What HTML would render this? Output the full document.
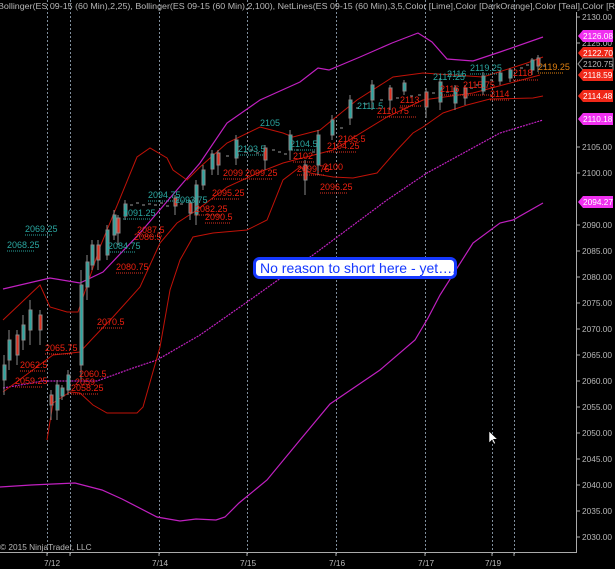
<!DOCTYPE html>
<html><head><meta charset="utf-8"><style>
html,body{margin:0;padding:0;background:#000;width:615px;height:569px;overflow:hidden}
svg{display:block}
.ax{font:8.3px "Liberation Sans",sans-serif;fill:#b8b8b8}
.r{font:9px "Liberation Sans",sans-serif;fill:#f02010}
.t{font:9px "Liberation Sans",sans-serif;fill:#2aa6a0}
.tag{font:8.3px "Liberation Sans",sans-serif;fill:#fff}
</style></head><body>
<svg width="615" height="569" viewBox="0 0 615 569" xmlns="http://www.w3.org/2000/svg">
<rect width="615" height="569" fill="#000"/>
<g stroke="#7f8e9c" stroke-width="1" stroke-dasharray="2,2">
<line x1="47.5" y1="0" x2="47.5" y2="555"/><line x1="70.5" y1="0" x2="70.5" y2="555"/>
<line x1="159.5" y1="0" x2="159.5" y2="555"/><line x1="247.5" y1="0" x2="247.5" y2="555"/>
<line x1="336.5" y1="0" x2="336.5" y2="555"/><line x1="425.5" y1="0" x2="425.5" y2="555"/>
<line x1="492.5" y1="0" x2="492.5" y2="555"/><line x1="514.5" y1="0" x2="514.5" y2="555"/>
</g>
<text x="-2" y="9" class="ax" style="font-size:8.6px" textLength="617" lengthAdjust="spacingAndGlyphs">Bollinger(ES 09-15 (60 Min),2,25), Bollinger(ES 09-15 (60 Min),2,100), NetLines(ES 09-15 (60 Min),3,5,Color [Lime],Color [DarkOrange],Color [Teal],Color [R</text>
<!-- magenta bands -->
<g fill="none" stroke="#c020c0" stroke-width="1.2">
<polyline points="3,289 50,278 80,283 103,272 140,233 200,163 227,123 260,100 300,82 318,68 329,70 360,57 392,43 418,33 432,42 447,59 473,61 500,52 543,37"/>
<polyline points="0,487 31,485 75,483 102,490 122,499 157,517 180,521 196,519 216,520 225,517 239,503 267,480 300,440 330,404 380,370 415,340 428,318 440,295 473,243 500,223 513,220 543,203"/>
<polyline stroke-dasharray="2,1" points="3,388 43,381 97,381 133,368 157,360 200,335 250,300 313,255 387,200 427,173 500,133 543,120"/>
</g>
<!-- red bands -->
<g fill="none" stroke="#c01208" stroke-width="1">
<polyline points="3,320 40,285 50,307 67,312 78,312 100,247 137,157 150,148 167,158 173,170 187,180 200,167 227,143 260,127 283,133 293,137 320,130 357,100 393,77 423,73 483,77 527,63 543,57"/>
<polyline points="47,440 53,403 70,392 80,393 93,405 107,413 137,413 143,407 160,347 170,290 180,260 193,237 213,233 247,230 267,220 283,180 300,167 310,173 333,177 353,178 377,173 397,150 413,133 423,127 443,113 467,105 490,99 533,98 543,96"/>
<polyline points="3,392 53,355 80,352 93,338 113,317 140,287 160,243 177,223 197,210 227,187 260,172 283,163 333,150 387,117 423,100 473,93 540,75"/>
</g>
<!-- candles -->
<g stroke-width="1">
<g stroke="#888" fill="#2aa6a0">
<line x1="4" y1="355" x2="4" y2="395"/><rect x="3" y="365" width="3" height="15"/>
<line x1="9" y1="330" x2="9" y2="370"/><rect x="8" y="340" width="3" height="20"/>
<line x1="23" y1="315" x2="23" y2="350"/><rect x="22" y="325" width="3" height="15"/>
<line x1="30" y1="300" x2="30" y2="345"/><rect x="29" y="310" width="3" height="20"/>
<line x1="57" y1="380" x2="57" y2="420"/><rect x="56" y="385" width="3" height="25"/>
<line x1="62" y1="385" x2="62" y2="400"/><rect x="61" y="388" width="3" height="8"/>
<line x1="68" y1="370" x2="68" y2="395"/><rect x="67" y="375" width="3" height="15"/>
<line x1="81" y1="270" x2="81" y2="380"/><rect x="80" y="285" width="3" height="80"/>
<line x1="87" y1="255" x2="87" y2="300"/><rect x="86" y="262" width="3" height="25"/>
<line x1="92" y1="240" x2="92" y2="270"/><rect x="91" y="245" width="3" height="20"/>
<line x1="107" y1="225" x2="107" y2="260"/><rect x="106" y="230" width="3" height="25"/>
<line x1="114" y1="210" x2="114" y2="240"/><rect x="113" y="215" width="3" height="20"/>
<line x1="125" y1="200" x2="125" y2="220"/><rect x="124" y="204" width="3" height="12"/>
<line x1="196" y1="180" x2="196" y2="225"/><rect x="195" y="185" width="3" height="30"/>
<line x1="203" y1="165" x2="203" y2="190"/><rect x="202" y="170" width="3" height="15"/>
<line x1="212" y1="150" x2="212" y2="175"/><rect x="211" y="154" width="3" height="15"/>
<line x1="236" y1="135" x2="236" y2="165"/><rect x="235" y="140" width="3" height="18"/>
<line x1="290" y1="130" x2="290" y2="160"/><rect x="289" y="135" width="3" height="15"/>
<line x1="318" y1="130" x2="318" y2="175"/><rect x="317" y="135" width="3" height="30"/>
<line x1="332" y1="115" x2="332" y2="140"/><rect x="331" y="120" width="3" height="15"/>
<line x1="350" y1="95" x2="350" y2="125"/><rect x="349" y="100" width="3" height="18"/>
<line x1="372" y1="80" x2="372" y2="110"/><rect x="371" y="85" width="3" height="15"/>
<line x1="404" y1="80" x2="404" y2="95"/><rect x="403" y="83" width="3" height="8"/>
<line x1="440" y1="78" x2="440" y2="110"/><rect x="439" y="82" width="3" height="20"/>
<line x1="455" y1="85" x2="455" y2="110"/><rect x="454" y="88" width="3" height="15"/>
<line x1="483" y1="72" x2="483" y2="95"/><rect x="482" y="76" width="3" height="15"/>
<line x1="500" y1="70" x2="500" y2="85"/><rect x="499" y="73" width="3" height="8"/>
<line x1="510" y1="68" x2="510" y2="82"/><rect x="509" y="70" width="3" height="8"/>
<line x1="532" y1="58" x2="532" y2="75"/><rect x="531" y="60" width="3" height="10"/>
</g>
<g stroke="#888" fill="#e03020">
<line x1="17" y1="330" x2="17" y2="365"/><rect x="16" y="335" width="3" height="20"/>
<line x1="40" y1="310" x2="40" y2="345"/><rect x="39" y="315" width="3" height="15"/>
<line x1="51" y1="390" x2="51" y2="420"/><rect x="50" y="395" width="3" height="10"/>
<line x1="98" y1="240" x2="98" y2="270"/><rect x="97" y="245" width="3" height="15"/>
<line x1="118" y1="215" x2="118" y2="245"/><rect x="117" y="218" width="3" height="15"/>
<line x1="175" y1="195" x2="175" y2="215"/><rect x="174" y="198" width="3" height="8"/>
<line x1="190" y1="200" x2="190" y2="220"/><rect x="189" y="203" width="3" height="10"/>
<line x1="218" y1="150" x2="218" y2="175"/><rect x="217" y="153" width="3" height="12"/>
<line x1="265" y1="145" x2="265" y2="170"/><rect x="264" y="148" width="3" height="12"/>
<line x1="305" y1="160" x2="305" y2="195"/><rect x="304" y="165" width="3" height="15"/>
<line x1="390" y1="85" x2="390" y2="110"/><rect x="389" y="88" width="3" height="12"/>
<line x1="426" y1="88" x2="426" y2="118"/><rect x="425" y="92" width="3" height="15"/>
<line x1="465" y1="85" x2="465" y2="105"/><rect x="464" y="88" width="3" height="10"/>
<line x1="538" y1="55" x2="538" y2="72"/><rect x="537" y="58" width="3" height="8"/>
</g>
<g stroke="#999" stroke-width="1">
<path d="M130 205h3M136 203h3M142 205h3M148 204h3M154 205h3M160 203h3M166 206h3M180 204h3M226 156h3M244 152h3M250 150h3M256 153h3M272 150h3M278 152h3M284 154h3M296 150h3M312 152h3M340 128h3M356 108h3M364 104h3M380 100h3M396 98h3M410 96h3M418 95h3M432 93h3M446 92h3M470 88h3M476 85h3M490 80h3M520 68h3M526 65h3M543 66h3"/>
</g>
</g>
<!-- labels -->
<g>
<text class="t" x="25" y="232">2069.25</text><text class="t" x="7" y="248">2068.25</text>
<text class="r" x="45" y="351">2065.75</text><text class="r" x="20" y="368">2062.5</text>
<text class="r" x="15" y="384">2059.25</text><text class="r" x="79" y="377">2060.5</text>
<text class="r" x="75" y="385">2059</text><text class="r" x="71" y="391">2058.25</text>
<text class="r" x="97" y="325">2070.5</text><text class="r" x="116" y="270">2080.75</text>
<text class="t" x="108" y="249">2084.75</text><text class="r" x="137" y="233">2087.5</text>
<text class="r" x="134" y="240">2086.5</text><text class="t" x="123" y="216">2091.25</text>
<text class="t" x="148" y="198">2094.75</text><text class="t" x="175" y="203">2093.75</text>
<text class="r" x="195" y="212">2082.25</text><text class="r" x="205" y="220">2090.5</text>
<text class="r" x="212" y="196">2095.25</text><text class="r" x="223" y="176">2099</text>
<text class="r" x="245" y="176">2099.25</text><text class="t" x="238" y="152">2103.5</text>
<text class="t" x="260" y="126">2105</text><text class="t" x="290" y="147">2104.5</text>
<text class="r" x="293" y="159">2102</text><text class="r" x="297" y="172">2099.75</text>
<text class="r" x="323" y="170">2100</text><text class="r" x="320" y="190">2096.25</text>
<text class="r" x="338" y="142">2105.5</text><text class="r" x="327" y="149">2104.25</text>
<text class="t" x="357" y="109">2111.5</text><text class="r" x="377" y="114">2110.75</text>
<text class="r" x="400" y="103">2113</text><text class="t" x="433" y="80">2117.25</text>
<text class="t" x="447" y="77">2116</text><text class="r" x="440" y="92">2116</text>
<text class="r" x="463" y="88">2115.75</text><text class="t" x="470" y="71">2119.25</text>
<text class="r" x="490" y="97">2114</text><text class="r" x="513" y="76">2118</text>
<text x="538" y="70" style="font:9px 'Liberation Sans',sans-serif;fill:#e08010">2119.25</text>
</g>
<g stroke="#e03020" stroke-width="1" stroke-dasharray="1,1" fill="none">
<path d="M45 354h28M20 371h25M15 387h28M71 394h28M97 328h25M116 273h28M137 236h25M195 215h28M205 223h25M212 199h28M223 179h50M293 162h22M297 175h28M320 193h28M327 152h30M377 117h40M400 106h22M440 95h55M490 100h20M513 80h25"/>
</g>
<path d="M538 73h25" stroke="#e08010" stroke-dasharray="1,1"/>
<g stroke="#2aa6a0" stroke-dasharray="1,1" fill="none"><path d="M25 235h28M7 251h28M108 252h28M123 219h28M148 201h50M238 155h25M290 150h25M470 74h28"/></g>
<!-- axes -->
<line x1="576.5" y1="12" x2="576.5" y2="552" stroke="#aaa"/>
<line x1="0" y1="552.5" x2="577" y2="552.5" stroke="#aaa"/>
<g class="ax">
<text x="582" y="20">2130.00</text><text x="582" y="46">2125.00</text>
<text x="582" y="150">2105.00</text><text x="582" y="176">2100.00</text>
<text x="582" y="228">2090.00</text><text x="582" y="254">2085.00</text>
<text x="582" y="280">2080.00</text><text x="582" y="306">2075.00</text>
<text x="582" y="332">2070.00</text><text x="582" y="358">2065.00</text>
<text x="582" y="384">2060.00</text><text x="582" y="410">2055.00</text>
<text x="582" y="436">2050.00</text><text x="582" y="462">2045.00</text>
<text x="582" y="488">2040.00</text><text x="582" y="514">2035.00</text>
<text x="582" y="540">2030.00</text>
<text x="44" y="566">7/12</text><text x="152" y="566">7/14</text><text x="240" y="566">7/15</text>
<text x="329" y="566">7/16</text><text x="418" y="566">7/17</text><text x="485" y="566">7/19</text>
<text x="0" y="550">© 2015 NinjaTrader, LLC</text>
</g>
<g stroke="#aaa"><path d="M577 17h3M577 43h3M577 147h3M577 173h3M577 225h3M577 251h3M577 277h3M577 303h3M577 329h3M577 355h3M577 381h3M577 407h3M577 433h3M577 459h3M577 485h3M577 511h3M577 537h3M47 552v4M70 552v4M159 552v4M247 552v4M336 552v4M425 552v4M492 552v4M514 552v4"/></g>
<!-- tags -->
<g>
<path d="M578 36l5-6h30v12h-30z" fill="#f030f0"/><text class="tag" x="583" y="39">2126.08</text>
<path d="M578 53l5-6h30v12h-30z" fill="#f02818"/><text class="tag" x="583" y="56">2122.70</text>
<path d="M578 64l5-6h30v12h-30z" fill="#000" stroke="#888"/><text class="ax" x="583" y="67">2120.75</text>
<path d="M578 75l5-6h30v12h-30z" fill="#f02818"/><text class="tag" x="583" y="78">2118.59</text>
<path d="M578 96l5-6h30v12h-30z" fill="#f02818"/><text class="tag" x="583" y="99">2114.48</text>
<path d="M578 119l5-6h30v12h-30z" fill="#f030f0"/><text class="tag" x="583" y="122">2110.18</text>
<path d="M578 202l5-6h30v12h-30z" fill="#f030f0"/><text class="tag" x="583" y="205">2094.27</text>
</g>
<!-- cursor -->
<path d="M489 431v12l3-3 2 4 1.5-.7-2-4h4z" fill="#fff" stroke="#000" stroke-width=".6"/>
<!-- callout -->
<rect x="254.5" y="258.5" width="201" height="19" rx="5" fill="#fff" stroke="#1538ff" stroke-width="3"/>
<text x="260" y="273" style="font:14px 'Liberation Sans',sans-serif;fill:#1538ff">No reason to short here - yet….</text>
</svg>
</body></html>
